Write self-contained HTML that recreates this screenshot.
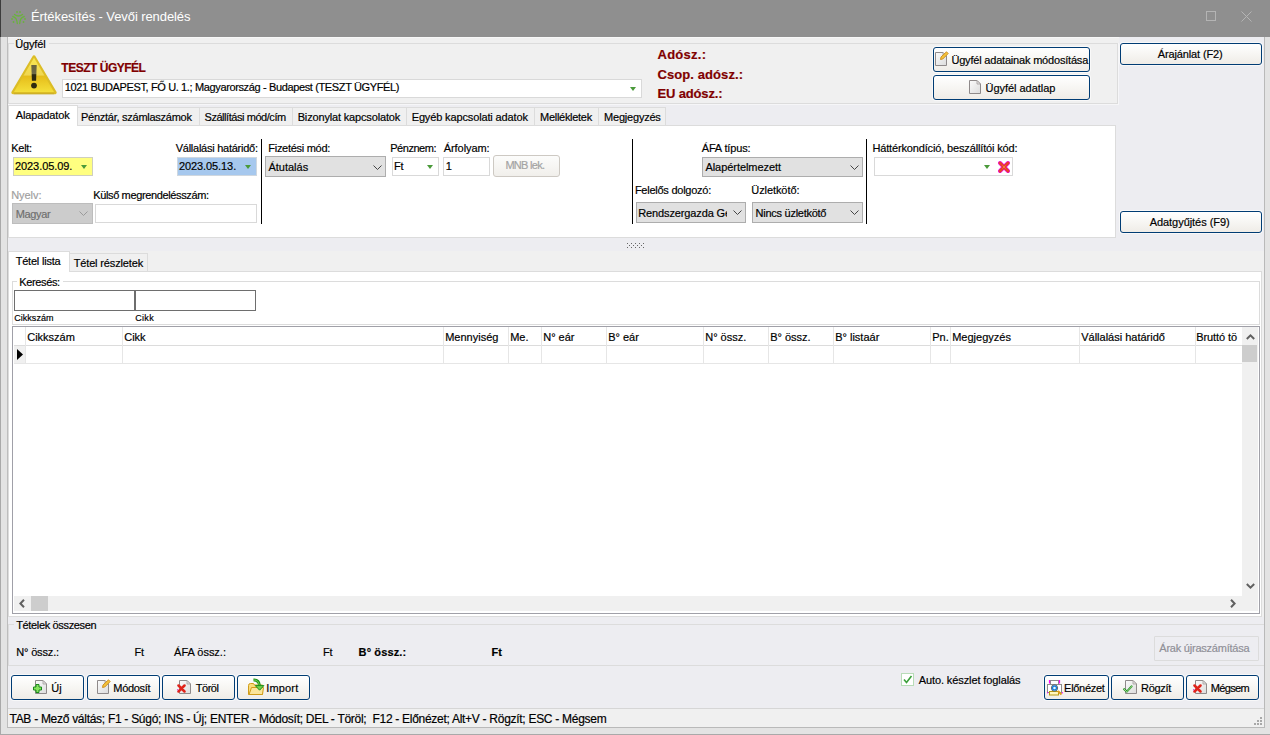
<!DOCTYPE html><html><head><meta charset="utf-8"><style>
html,body{margin:0;padding:0;}
body{width:1270px;height:735px;overflow:hidden;position:relative;background:#ededf1;font-family:"Liberation Sans",sans-serif;}
.a{position:absolute;box-sizing:border-box;}
.t{position:absolute;white-space:nowrap;font-family:"Liberation Sans",sans-serif;color:#000;-webkit-text-stroke:0.18px;}
.btn{border:1px solid #003c74;border-radius:3px;background:linear-gradient(#ffffff,#f7f6f3 50%,#efece7);box-shadow:0 0 0 1px rgba(255,255,255,0.6);}
</style></head><body>
<div class="a" style="left:0px;top:0px;width:1270px;height:37px;background:#8f8f8f"></div>
<div class="a" style="left:0px;top:0px;width:1px;height:37px;background:#3c3c3c"></div>
<div class="a" style="left:0px;top:37px;width:1px;height:698px;background:#a9a9a9"></div>
<div class="a" style="left:1px;top:37px;width:6px;height:698px;background:#e3e3e3"></div>
<div class="a" style="left:7px;top:37px;width:1px;height:691px;background:#bdbdbd"></div>
<div class="a" style="left:1264px;top:37px;width:1px;height:691px;background:#b9b9b9"></div>
<div class="a" style="left:1265px;top:37px;width:5px;height:698px;background:#e3e3e3"></div>
<div class="a" style="left:7px;top:727px;width:1258px;height:1px;background:#b9b9b9"></div>
<div class="a" style="left:1px;top:728px;width:1269px;height:6px;background:#e3e3e3"></div>
<div class="a" style="left:0px;top:734px;width:1270px;height:1px;background:#a9a9a9"></div>
<svg class="a" style="left:10px;top:9.6px" width="17" height="16" viewBox="0 0 17 16">
<g fill="#6ab23e"><circle cx="7" cy="2" r="0.9"/><circle cx="10" cy="2" r="0.9"/>
<circle cx="2" cy="9" r="0.9"/><circle cx="15" cy="9" r="0.9"/><circle cx="3.5" cy="12" r="0.9"/><circle cx="13.5" cy="12" r="0.9"/></g>
<g fill="none" stroke="#6ab23e" stroke-width="1.3" stroke-linecap="round">
<path d="M4.5 4.5 Q8.5 7.5 12.5 4.5"/><path d="M2.8 6.5 Q7 7.5 7.3 13.5"/><path d="M14.2 6.5 Q10 7.5 9.7 13.5"/></g></svg>
<div class="t" style="left:31.00px;top:9px;font-size:13px;line-height:15px;color:#ffffff;letter-spacing:-0.089px;-webkit-text-stroke:0;">Értékesítés - Vevői rendelés</div>
<div class="a" style="left:1206px;top:11px;width:10px;height:10px;border:1px solid #b4b4b4"></div>
<svg class="a" style="left:1241px;top:11px" width="11" height="11"><path d="M0.5 0.5L10.5 10.5M10.5 0.5L0.5 10.5" stroke="#b4b4b4" stroke-width="1"/></svg>
<div class="a" style="left:8px;top:37px;width:1111px;height:68px;background:#f0f0f0"></div>
<div class="a" style="left:8px;top:37px;width:1111px;height:1px;background:#f7f7f7"></div>
<div class="a" style="left:8px;top:104px;width:1111px;height:1px;background:#f6f6f8"></div>
<div class="a" style="left:1118px;top:43px;width:1px;height:62px;background:#f6f6f8"></div>
<div class="a" style="left:8px;top:43px;width:1110px;height:61px;border:1px solid #dcdcdc"></div>
<div class="a" style="left:14px;top:38px;width:35px;height:12px;background:#f0f0f0"></div>
<div class="t" style="left:15.20px;top:38px;font-size:11px;line-height:13px;letter-spacing:-0.138px;">Ügyfél</div>
<svg class="a" style="left:11px;top:54px" width="47" height="42" viewBox="0 0 47 42">
<defs><linearGradient id="wg" x1="0" y1="0" x2="0" y2="1"><stop offset="0" stop-color="#f8e650"/><stop offset="0.5" stop-color="#f0d752"/><stop offset="0.54" stop-color="#e6bd1a"/><stop offset="1" stop-color="#f4df3a"/></linearGradient>
<linearGradient id="eg" x1="0" y1="0" x2="0" y2="1"><stop offset="0" stop-color="#67623c"/><stop offset="0.55" stop-color="#6e6a48"/><stop offset="0.62" stop-color="#2e2a10"/><stop offset="1" stop-color="#2e2a10"/></linearGradient></defs>
<path d="M23 3 L44 38.5 L2 38.5 Z" fill="url(#wg)" stroke="#dcbd26" stroke-width="3.4" stroke-linejoin="round"/>
<path d="M23 3.8 L43 38 L3 38 Z" fill="url(#wg)"/>
<path d="M3 39.8 L43 39.8" stroke="#b59a2a" stroke-width="1" opacity="0.5"/>
<path d="M20.3 11 L25.7 11 L25.1 26.7 L20.9 26.7 Z" fill="url(#eg)"/>
<circle cx="23" cy="31.6" r="2.9" fill="#2e2a10"/>
</svg>
<div class="t" style="left:61.30px;top:61px;font-size:12px;line-height:14px;color:#800000;font-weight:bold;letter-spacing:-0.488px;">TESZT ÜGYFÉL</div>
<div class="a" style="left:62px;top:79px;width:580px;height:19px;background:#fff;border:1px solid #d9d9d9"></div>
<div class="t" style="left:64.70px;top:81px;font-size:11px;line-height:13px;letter-spacing:-0.365px;">1021 BUDAPEST, FŐ U. 1.; Magyarország - Budapest (TESZT ÜGYFÉL)</div>
<div class="a" style="left:629.7px;top:87px;width:0;height:0;border-left:3.8px solid transparent;border-right:3.8px solid transparent;border-top:4.3px solid #4a9a3a"></div>
<div class="t" style="left:657.50px;top:47px;font-size:13px;line-height:15px;color:#800000;font-weight:bold;letter-spacing:0.260px;">Adósz.:</div>
<div class="t" style="left:657.50px;top:67px;font-size:13px;line-height:15px;color:#800000;font-weight:bold;letter-spacing:0.083px;">Csop. adósz.:</div>
<div class="t" style="left:657.50px;top:86px;font-size:13px;line-height:15px;color:#800000;font-weight:bold;letter-spacing:-0.161px;">EU adósz.:</div>
<div class="a btn" style="left:933px;top:47px;width:157px;height:25px"></div>
<div class="a btn" style="left:933px;top:75px;width:157px;height:25px"></div>
<div class="t" style="left:951.40px;top:54px;font-size:11px;line-height:13px;letter-spacing:-0.191px;">Ügyfél adatainak módosítása</div>
<div class="t" style="left:985.50px;top:82px;font-size:11px;line-height:13px;letter-spacing:-0.029px;">Ügyfél adatlap</div>
<svg class="a" style="left:935px;top:52px" width="12" height="14" viewBox="0 0 12 14">
<defs><linearGradient id="dg1" x1="0" y1="0" x2="1" y2="1"><stop offset="0" stop-color="#fbfbfb"/><stop offset="1" stop-color="#dcdcdc"/></linearGradient></defs>
<path d="M0.5 0.5 H8 L11.5 4 V13.5 H0.5Z" fill="url(#dg1)" stroke="#8f8a8a" stroke-width="1"/>
<path d="M8 0.5 V4 H11.5 Z" fill="#e4e4e4" stroke="#a29c9c" stroke-width="0.8" stroke-linejoin="miter"/></svg>
<svg class="a" style="left:939px;top:51px" width="10" height="10" viewBox="0 0 10 10">
<path d="M1.5 8.5 L2 6 L7.5 0.8 L9.2 2.5 L3.8 8 Z" fill="#f5c33b" stroke="#c98a1a" stroke-width="0.9"/></svg>
<svg class="a" style="left:969px;top:80px" width="12" height="14" viewBox="0 0 12 14">
<defs><linearGradient id="dg2" x1="0" y1="0" x2="1" y2="1"><stop offset="0" stop-color="#fbfbfb"/><stop offset="1" stop-color="#dcdcdc"/></linearGradient></defs>
<path d="M0.5 0.5 H8 L11.5 4 V13.5 H0.5Z" fill="url(#dg2)" stroke="#8f8a8a" stroke-width="1"/>
<path d="M8 0.5 V4 H11.5 Z" fill="#e4e4e4" stroke="#a29c9c" stroke-width="0.8" stroke-linejoin="miter"/></svg>
<div class="a btn" style="left:1120px;top:43px;width:142px;height:22px"></div>
<div class="t" style="left:1157.70px;top:48px;font-size:11px;line-height:13px;letter-spacing:-0.127px;">Árajánlat (F2)</div>
<div class="a btn" style="left:1120px;top:211px;width:142px;height:22px"></div>
<div class="t" style="left:1149.70px;top:216px;font-size:11px;line-height:13px;letter-spacing:-0.050px;">Adatgyűjtés (F9)</div>
<div class="a" style="left:8px;top:125px;width:1108px;height:113px;background:#fff;border:1px solid #dcdcdc"></div>
<div class="a" style="left:77px;top:107px;width:123px;height:19px;background:#f0f0f0;border:1px solid #dcdcdc"></div>
<div class="t" style="left:81.00px;top:111px;font-size:11px;line-height:13px;letter-spacing:-0.260px;">Pénztár, számlaszámok</div>
<div class="a" style="left:199px;top:107px;width:94px;height:19px;background:#f0f0f0;border:1px solid #dcdcdc"></div>
<div class="t" style="left:204.50px;top:111px;font-size:11px;line-height:13px;letter-spacing:-0.446px;">Szállítási mód/cím</div>
<div class="a" style="left:292px;top:107px;width:115px;height:19px;background:#f0f0f0;border:1px solid #dcdcdc"></div>
<div class="t" style="left:297.70px;top:111px;font-size:11px;line-height:13px;letter-spacing:-0.162px;">Bizonylat kapcsolatok</div>
<div class="a" style="left:406px;top:107px;width:129px;height:19px;background:#f0f0f0;border:1px solid #dcdcdc"></div>
<div class="t" style="left:411.70px;top:111px;font-size:11px;line-height:13px;letter-spacing:-0.138px;">Egyéb kapcsolati adatok</div>
<div class="a" style="left:534px;top:107px;width:65px;height:19px;background:#f0f0f0;border:1px solid #dcdcdc"></div>
<div class="t" style="left:540.10px;top:111px;font-size:11px;line-height:13px;letter-spacing:-0.293px;">Mellékletek</div>
<div class="a" style="left:598px;top:107px;width:68px;height:19px;background:#f0f0f0;border:1px solid #dcdcdc"></div>
<div class="t" style="left:604.10px;top:111px;font-size:11px;line-height:13px;letter-spacing:-0.213px;">Megjegyzés</div>
<div class="a" style="left:8px;top:105px;width:70px;height:21px;background:#fff;border:1px solid #dcdcdc;border-bottom:none"></div>
<div class="t" style="left:15.70px;top:109px;font-size:11px;line-height:13px;letter-spacing:-0.122px;">Alapadatok</div>
<div class="t" style="left:11.20px;top:142px;font-size:11px;line-height:13px;letter-spacing:-0.258px;">Kelt:</div>
<div class="a" style="left:13px;top:157px;width:80px;height:19px;background:#ffff80;border:1px solid #cfcfbf"></div>
<div class="t" style="left:15.00px;top:160px;font-size:11px;line-height:13px;letter-spacing:-0.079px;">2023.05.09.</div>
<div class="a" style="left:80.7px;top:165px;width:0;height:0;border-left:3.8px solid transparent;border-right:3.8px solid transparent;border-top:4.3px solid #4a9a3a"></div>
<div class="t" style="left:175.70px;top:142px;font-size:11px;line-height:13px;letter-spacing:-0.254px;">Vállalási határidő:</div>
<div class="a" style="left:177px;top:157px;width:80px;height:19px;background:#a6c8ee;border:1px solid #cfd7df"></div>
<div class="t" style="left:178.90px;top:160px;font-size:11px;line-height:13px;letter-spacing:-0.079px;">2023.05.13.</div>
<div class="a" style="left:244.7px;top:165px;width:0;height:0;border-left:3.8px solid transparent;border-right:3.8px solid transparent;border-top:4.3px solid #4a9a3a"></div>
<div class="a" style="left:261px;top:139px;width:1px;height:85px;background:#000"></div>
<div class="t" style="left:268.30px;top:142px;font-size:11px;line-height:13px;letter-spacing:-0.286px;">Fizetési mód:</div>
<div class="a" style="left:265px;top:156px;width:121px;height:21px;background:#e1e1e1;border:1px solid #adadad"></div>
<div class="t" style="left:268.50px;top:161px;font-size:11px;line-height:13px;letter-spacing:-0.012px;">Átutalás</div>
<svg class="a" style="left:373px;top:165px" width="9" height="5" viewBox="0 0 9 5"><path d="M0.5 0.5 L4.5 4.5 L8.5 0.5" fill="none" stroke="#444" stroke-width="1"/></svg>
<div class="t" style="left:390.20px;top:142px;font-size:11px;line-height:13px;letter-spacing:-0.452px;">Pénznem:</div>
<div class="t" style="left:443.70px;top:142px;font-size:11px;line-height:13px;letter-spacing:-0.059px;">Árfolyam:</div>
<div class="a" style="left:392px;top:157px;width:47px;height:19px;background:#fff;border:1px solid #d9d9d9"></div>
<div class="t" style="left:393.90px;top:160px;font-size:11px;line-height:13px;">Ft</div>
<div class="a" style="left:426.7px;top:165px;width:0;height:0;border-left:3.8px solid transparent;border-right:3.8px solid transparent;border-top:4.3px solid #4a9a3a"></div>
<div class="a" style="left:443px;top:157px;width:47px;height:19px;background:#fff;border:1px solid #d9d9d9"></div>
<div class="t" style="left:445.70px;top:160px;font-size:11px;line-height:13px;">1</div>
<div class="a" style="left:493px;top:155px;width:67px;height:22px;border:1px solid #cdc9c3;border-radius:3px;background:linear-gradient(#fcfcfb,#f1efeb)"></div>
<div class="t" style="left:505.40px;top:159px;font-size:11px;line-height:13px;color:#a3a3a3;letter-spacing:-0.718px;">MNB lek.</div>
<div class="t" style="left:11.20px;top:189px;font-size:11px;line-height:13px;color:#a0a0a0;letter-spacing:-0.052px;">Nyelv:</div>
<div class="a" style="left:12px;top:203px;width:81px;height:21px;background:#cccccc;border:1px solid #bdbdbd"></div>
<div class="t" style="left:15.70px;top:208px;font-size:11px;line-height:13px;color:#6f6f6f;letter-spacing:-0.338px;">Magyar</div>
<svg class="a" style="left:79px;top:211px" width="9" height="5" viewBox="0 0 9 5"><path d="M0.5 0.5 L4.5 4.5 L8.5 0.5" fill="none" stroke="#9a9a9a" stroke-width="1"/></svg>
<div class="t" style="left:93.20px;top:189px;font-size:11px;line-height:13px;letter-spacing:-0.360px;">Külső megrendelésszám:</div>
<div class="a" style="left:95px;top:204px;width:162px;height:19px;background:#fff;border:1px solid #d9d9d9"></div>
<div class="a" style="left:632px;top:139px;width:1px;height:85px;background:#000"></div>
<div class="t" style="left:701.70px;top:142px;font-size:11px;line-height:13px;letter-spacing:-0.132px;">ÁFA típus:</div>
<div class="a" style="left:702px;top:157px;width:161px;height:20px;background:#e1e1e1;border:1px solid #adadad"></div>
<div class="t" style="left:705.40px;top:161px;font-size:11px;line-height:13px;letter-spacing:-0.048px;">Alapértelmezett</div>
<svg class="a" style="left:849.5px;top:165px" width="9" height="5" viewBox="0 0 9 5"><path d="M0.5 0.5 L4.5 4.5 L8.5 0.5" fill="none" stroke="#444" stroke-width="1"/></svg>
<div class="t" style="left:634.90px;top:184px;font-size:11px;line-height:13px;letter-spacing:-0.250px;">Felelős dolgozó:</div>
<div class="a" style="left:636px;top:202px;width:110px;height:21px;background:#e1e1e1;border:1px solid #adadad"></div>
<div class="t" style="left:638.2px;top:207px;font-size:11px;line-height:13px;width:89px;overflow:hidden;letter-spacing:-0.12px">Rendszergazda Gépház</div>
<svg class="a" style="left:733px;top:210px" width="9" height="5" viewBox="0 0 9 5"><path d="M0.5 0.5 L4.5 4.5 L8.5 0.5" fill="none" stroke="#444" stroke-width="1"/></svg>
<div class="t" style="left:751.30px;top:184px;font-size:11px;line-height:13px;letter-spacing:-0.082px;">Üzletkötő:</div>
<div class="a" style="left:752px;top:202px;width:111px;height:21px;background:#e1e1e1;border:1px solid #adadad"></div>
<div class="t" style="left:755.60px;top:207px;font-size:11px;line-height:13px;letter-spacing:-0.266px;">Nincs üzletkötő</div>
<svg class="a" style="left:849.5px;top:210px" width="9" height="5" viewBox="0 0 9 5"><path d="M0.5 0.5 L4.5 4.5 L8.5 0.5" fill="none" stroke="#444" stroke-width="1"/></svg>
<div class="a" style="left:866px;top:139px;width:1px;height:85px;background:#000"></div>
<div class="t" style="left:872.40px;top:142px;font-size:11px;line-height:13px;letter-spacing:-0.149px;">Háttérkondíció, beszállítói kód:</div>
<div class="a" style="left:874px;top:157px;width:139px;height:19px;background:#fff;border:1px solid #d9d9d9"></div>
<div class="a" style="left:983.7px;top:165px;width:0;height:0;border-left:3.8px solid transparent;border-right:3.8px solid transparent;border-top:4.3px solid #4a9a3a"></div>
<svg class="a" style="left:997px;top:160px" width="14" height="14" viewBox="0 0 14 14">
<path d="M3 3 L11 11 M11 3 L3 11" stroke="#f000f0" stroke-width="4" stroke-linecap="round"/><path d="M3 3 L11 11 M11 3 L3 11" stroke="#e8402a" stroke-width="2.9" stroke-linecap="round"/><path d="M5.5 5.5 L8.5 8.5 M8.5 5.5 L5.5 8.5" stroke="#f07a40" stroke-width="1" /></svg>
<div class="a" style="left:627px;top:243px;width:1px;height:1px;background:#666"></div>
<div class="a" style="left:631px;top:243px;width:1px;height:1px;background:#666"></div>
<div class="a" style="left:635px;top:243px;width:1px;height:1px;background:#666"></div>
<div class="a" style="left:639px;top:243px;width:1px;height:1px;background:#666"></div>
<div class="a" style="left:643px;top:243px;width:1px;height:1px;background:#666"></div>
<div class="a" style="left:629px;top:245px;width:1px;height:1px;background:#666"></div>
<div class="a" style="left:633px;top:245px;width:1px;height:1px;background:#666"></div>
<div class="a" style="left:637px;top:245px;width:1px;height:1px;background:#666"></div>
<div class="a" style="left:641px;top:245px;width:1px;height:1px;background:#666"></div>
<div class="a" style="left:627px;top:247px;width:1px;height:1px;background:#666"></div>
<div class="a" style="left:631px;top:247px;width:1px;height:1px;background:#666"></div>
<div class="a" style="left:635px;top:247px;width:1px;height:1px;background:#666"></div>
<div class="a" style="left:639px;top:247px;width:1px;height:1px;background:#666"></div>
<div class="a" style="left:643px;top:247px;width:1px;height:1px;background:#666"></div>
<div class="a" style="left:8px;top:251px;width:1256px;height:20px;background:#f0f0f0"></div>
<div class="a" style="left:1262px;top:271px;width:2px;height:346px;background:#f0f0f0"></div>
<div class="a" style="left:8px;top:271px;width:1254px;height:346px;background:#fff;border:1px solid #dcdcdc"></div>
<div class="a" style="left:69px;top:253px;width:79px;height:19px;background:#f0f0f0;border:1px solid #dcdcdc"></div>
<div class="t" style="left:73.70px;top:257px;font-size:11px;line-height:13px;letter-spacing:-0.147px;">Tétel részletek</div>
<div class="a" style="left:8px;top:251px;width:62px;height:21px;background:#fff;border:1px solid #dcdcdc;border-bottom:none"></div>
<div class="t" style="left:15.70px;top:255px;font-size:11px;line-height:13px;letter-spacing:-0.209px;">Tétel lista</div>
<div class="a" style="left:12px;top:281px;width:1248px;height:44px;border:1px solid #dcdcdc"></div>
<div class="a" style="left:17px;top:278px;width:46px;height:10px;background:#fff"></div>
<div class="t" style="left:19.20px;top:276px;font-size:11px;line-height:13px;letter-spacing:-0.348px;">Keresés:</div>
<div class="a" style="left:14px;top:290px;width:121px;height:21px;background:#fff;border:1px solid #6e6e6e"></div>
<div class="a" style="left:135px;top:290px;width:121px;height:21px;background:#fff;border:1px solid #6e6e6e"></div>
<div class="t" style="left:14.20px;top:313px;font-size:9px;line-height:11px;letter-spacing:0.043px;">Cikkszám</div>
<div class="t" style="left:135.20px;top:313px;font-size:9px;line-height:11px;letter-spacing:0.333px;">Cikk</div>
<div class="a" style="left:12px;top:326px;width:1248px;height:288px;border:1px solid #a0a0a8"></div>
<div class="a" style="left:14px;top:327px;width:1228px;height:269px;background:#fff"></div>
<div class="a" style="left:1242px;top:327px;width:16px;height:269px;background:#f0f0f0"></div>
<div class="a" style="left:14px;top:596px;width:1244px;height:15px;background:#f0f0f0"></div>
<div class="a" style="left:14px;top:345px;width:1228px;height:1px;background:#dcdcdc"></div>
<div class="a" style="left:14px;top:363px;width:1228px;height:1px;background:#e6e6e6"></div>
<div class="a" style="left:14px;top:346px;width:11px;height:17px;background:#f0f0f0"></div>
<div class="a" style="left:25px;top:327px;width:1px;height:36px;background:#e6e6e6"></div>
<div class="a" style="left:122px;top:327px;width:1px;height:36px;background:#e6e6e6"></div>
<div class="a" style="left:443px;top:327px;width:1px;height:36px;background:#e6e6e6"></div>
<div class="a" style="left:508px;top:327px;width:1px;height:36px;background:#e6e6e6"></div>
<div class="a" style="left:541px;top:327px;width:1px;height:36px;background:#e6e6e6"></div>
<div class="a" style="left:606px;top:327px;width:1px;height:36px;background:#e6e6e6"></div>
<div class="a" style="left:703px;top:327px;width:1px;height:36px;background:#e6e6e6"></div>
<div class="a" style="left:768px;top:327px;width:1px;height:36px;background:#e6e6e6"></div>
<div class="a" style="left:833px;top:327px;width:1px;height:36px;background:#e6e6e6"></div>
<div class="a" style="left:930px;top:327px;width:1px;height:36px;background:#e6e6e6"></div>
<div class="a" style="left:950px;top:327px;width:1px;height:36px;background:#e6e6e6"></div>
<div class="a" style="left:1079px;top:327px;width:1px;height:36px;background:#e6e6e6"></div>
<div class="a" style="left:1195px;top:327px;width:1px;height:36px;background:#e6e6e6"></div>
<div class="a" style="left:1195px;top:327px;width:47px;height:19px;overflow:hidden">
<div class="t" style="left:1.3px;top:4px;font-size:11px;line-height:13px;letter-spacing:-0.1px">Bruttó tö</div></div>
<div class="t" style="left:27.20px;top:331px;font-size:11px;line-height:13px;">Cikkszám</div>
<div class="t" style="left:124.20px;top:331px;font-size:11px;line-height:13px;">Cikk</div>
<div class="t" style="left:445.20px;top:331px;font-size:11px;line-height:13px;">Mennyiség</div>
<div class="t" style="left:510.20px;top:331px;font-size:11px;line-height:13px;">Me.</div>
<div class="t" style="left:543.20px;top:331px;font-size:11px;line-height:13px;">N° eár</div>
<div class="t" style="left:608.20px;top:331px;font-size:11px;line-height:13px;">B° eár</div>
<div class="t" style="left:705.20px;top:331px;font-size:11px;line-height:13px;">N° össz.</div>
<div class="t" style="left:770.20px;top:331px;font-size:11px;line-height:13px;">B° össz.</div>
<div class="t" style="left:835.20px;top:331px;font-size:11px;line-height:13px;">B° listaár</div>
<div class="t" style="left:932.20px;top:331px;font-size:11px;line-height:13px;">Pn.</div>
<div class="t" style="left:952.20px;top:331px;font-size:11px;line-height:13px;">Megjegyzés</div>
<div class="t" style="left:1081.20px;top:331px;font-size:11px;line-height:13px;">Vállalási határidő</div>
<svg class="a" style="left:17px;top:349px" width="7" height="11"><path d="M0 0 L6 5.5 L0 11Z" fill="#000"/></svg>
<svg class="a" style="left:1245.5px;top:334px" width="9" height="6"><path d="M0.8 5 L4.5 1.4 L8.2 5" fill="none" stroke="#606060" stroke-width="2"/></svg>
<div class="a" style="left:1242px;top:345px;width:15px;height:17px;background:#cdcdcd"></div>
<svg class="a" style="left:1245.5px;top:583px" width="9" height="6"><path d="M0.8 1 L4.5 4.6 L8.2 1" fill="none" stroke="#606060" stroke-width="2"/></svg>
<svg class="a" style="left:19px;top:599px" width="6" height="9"><path d="M5 0.8 L1.4 4.5 L5 8.2" fill="none" stroke="#606060" stroke-width="2"/></svg>
<div class="a" style="left:31px;top:596px;width:17px;height:15px;background:#cdcdcd"></div>
<svg class="a" style="left:1230px;top:599px" width="6" height="9"><path d="M1 0.8 L4.6 4.5 L1 8.2" fill="none" stroke="#606060" stroke-width="2"/></svg>
<div class="a" style="left:8px;top:624px;width:1256px;height:42px;border:1px solid #dcdcdc;border-right:none"></div>
<div class="a" style="left:14px;top:618px;width:86px;height:12px;background:#ededf1"></div>
<div class="t" style="left:16.20px;top:619px;font-size:11px;line-height:13px;letter-spacing:-0.344px;">Tételek összesen</div>
<div class="t" style="left:16.20px;top:646px;font-size:11px;line-height:13px;letter-spacing:-0.145px;">N° össz.:</div>
<div class="t" style="left:134.40px;top:646px;font-size:11px;line-height:13px;">Ft</div>
<div class="t" style="left:174.10px;top:646px;font-size:11px;line-height:13px;letter-spacing:-0.011px;">ÁFA össz.:</div>
<div class="t" style="left:322.90px;top:646px;font-size:11px;line-height:13px;">Ft</div>
<div class="t" style="left:358.60px;top:646px;font-size:11px;line-height:13px;font-weight:bold;letter-spacing:0.126px;">B° össz.:</div>
<div class="t" style="left:491.60px;top:646px;font-size:11px;line-height:13px;font-weight:bold;">Ft</div>
<div class="a" style="left:1154px;top:636px;width:105px;height:25px;border:1px solid #dcdcdc;border-radius:1px"></div>
<div class="t" style="left:1159.30px;top:642px;font-size:11px;line-height:13px;color:#8f8f97;letter-spacing:-0.223px;">Árak újraszámítása</div>
<div class="a btn" style="left:11px;top:675px;width:73px;height:25px"></div>
<div class="t" style="left:51.30px;top:682px;font-size:11px;line-height:13px;">Új</div>
<div class="a btn" style="left:87px;top:675px;width:73px;height:25px"></div>
<div class="t" style="left:113.30px;top:682px;font-size:11px;line-height:13px;letter-spacing:-0.326px;">Módosít</div>
<div class="a btn" style="left:162px;top:675px;width:73px;height:25px"></div>
<div class="t" style="left:195.70px;top:682px;font-size:11px;line-height:13px;letter-spacing:-0.441px;">Töröl</div>
<div class="a btn" style="left:237px;top:675px;width:73px;height:25px"></div>
<div class="t" style="left:266.20px;top:682px;font-size:11px;line-height:13px;letter-spacing:0.183px;">Import</div>
<div class="a btn" style="left:1044px;top:675px;width:65px;height:25px"></div>
<div class="t" style="left:1064.10px;top:682px;font-size:11px;line-height:13px;letter-spacing:-0.292px;">Előnézet</div>
<div class="a btn" style="left:1111px;top:675px;width:73px;height:25px"></div>
<div class="t" style="left:1141.10px;top:682px;font-size:11px;line-height:13px;letter-spacing:-0.302px;">Rögzít</div>
<div class="a btn" style="left:1186px;top:675px;width:73px;height:25px"></div>
<div class="t" style="left:1210.70px;top:682px;font-size:11px;line-height:13px;letter-spacing:-0.637px;">Mégsem</div>
<div class="a" style="left:901px;top:673px;width:13px;height:13px;background:#fff;border:1px solid #b8dcb8"></div>
<svg class="a" style="left:902px;top:674px" width="11" height="11"><path d="M2 5.5 L4.5 8.5 L9.5 2" fill="none" stroke="#3aa03a" stroke-width="1.6"/></svg>
<div class="t" style="left:918.70px;top:674px;font-size:11px;line-height:13px;letter-spacing:-0.097px;">Auto. készlet foglalás</div>
<div class="a" style="left:8px;top:708px;width:1256px;height:1px;background:#d6d6d6"></div>
<div class="a" style="left:8px;top:709px;width:1256px;height:18px;background:#f0f0f0"></div>
<div class="t" style="left:9.50px;top:712px;font-size:12px;line-height:14px;letter-spacing:-0.285px;">TAB - Mező váltás; F1 - Súgó; INS - Új; ENTER - Módosít; DEL - Töröl;  F12 - Előnézet; Alt+V - Rögzít; ESC - Mégsem</div>
<div class="a" style="left:1260px;top:717px;width:2px;height:2px;background:#a8a8a8"></div>
<div class="a" style="left:1257px;top:720px;width:2px;height:2px;background:#a8a8a8"></div>
<div class="a" style="left:1260px;top:720px;width:2px;height:2px;background:#a8a8a8"></div>
<div class="a" style="left:1254px;top:723px;width:2px;height:2px;background:#a8a8a8"></div>
<div class="a" style="left:1257px;top:723px;width:2px;height:2px;background:#a8a8a8"></div>
<div class="a" style="left:1260px;top:723px;width:2px;height:2px;background:#a8a8a8"></div>
<svg class="a" style="left:35px;top:680px" width="12" height="14" viewBox="0 0 12 14">
<defs><linearGradient id="dg3" x1="0" y1="0" x2="1" y2="1"><stop offset="0" stop-color="#fbfbfb"/><stop offset="1" stop-color="#dcdcdc"/></linearGradient></defs>
<path d="M0.5 0.5 H8 L11.5 4 V13.5 H0.5Z" fill="url(#dg3)" stroke="#8f8a8a" stroke-width="1"/>
<path d="M8 0.5 V4 H11.5 Z" fill="#e4e4e4" stroke="#a29c9c" stroke-width="0.8" stroke-linejoin="miter"/></svg>
<svg class="a" style="left:33px;top:684px" width="9" height="9" viewBox="0 0 9 9">
<path d="M3 0.5 H6 V3 H8.5 V6 H6 V8.5 H3 V6 H0.5 V3 H3Z" fill="#86e35e" stroke="#1b8a1b" stroke-width="1"/></svg>
<svg class="a" style="left:97px;top:680px" width="12" height="14" viewBox="0 0 12 14">
<defs><linearGradient id="dg4" x1="0" y1="0" x2="1" y2="1"><stop offset="0" stop-color="#fbfbfb"/><stop offset="1" stop-color="#dcdcdc"/></linearGradient></defs>
<path d="M0.5 0.5 H8 L11.5 4 V13.5 H0.5Z" fill="url(#dg4)" stroke="#8f8a8a" stroke-width="1"/>
<path d="M8 0.5 V4 H11.5 Z" fill="#e4e4e4" stroke="#a29c9c" stroke-width="0.8" stroke-linejoin="miter"/></svg>
<svg class="a" style="left:101px;top:679px" width="10" height="10" viewBox="0 0 10 10">
<path d="M1.5 8.5 L2 6 L7.5 0.8 L9.2 2.5 L3.8 8 Z" fill="#f5c33b" stroke="#c98a1a" stroke-width="0.9"/></svg>
<svg class="a" style="left:179px;top:680px" width="12" height="14" viewBox="0 0 12 14">
<defs><linearGradient id="dg5" x1="0" y1="0" x2="1" y2="1"><stop offset="0" stop-color="#fbfbfb"/><stop offset="1" stop-color="#dcdcdc"/></linearGradient></defs>
<path d="M0.5 0.5 H8 L11.5 4 V13.5 H0.5Z" fill="url(#dg5)" stroke="#8f8a8a" stroke-width="1"/>
<path d="M8 0.5 V4 H11.5 Z" fill="#e4e4e4" stroke="#a29c9c" stroke-width="0.8" stroke-linejoin="miter"/></svg>
<svg class="a" style="left:177px;top:684px" width="9" height="9" viewBox="0 0 9 9">
<path d="M1.5 1.5 L7.5 7.5 M7.5 1.5 L1.5 7.5" stroke="#e0241a" stroke-width="2.5" stroke-linecap="round"/>
<path d="M0.6 5 L0.6 6.5" stroke="#e040e0" stroke-width="1"/></svg>
<svg class="a" style="left:1125px;top:680px" width="12" height="14" viewBox="0 0 12 14">
<defs><linearGradient id="dg6" x1="0" y1="0" x2="1" y2="1"><stop offset="0" stop-color="#fbfbfb"/><stop offset="1" stop-color="#dcdcdc"/></linearGradient></defs>
<path d="M0.5 0.5 H8 L11.5 4 V13.5 H0.5Z" fill="url(#dg6)" stroke="#8f8a8a" stroke-width="1"/>
<path d="M8 0.5 V4 H11.5 Z" fill="#e4e4e4" stroke="#a29c9c" stroke-width="0.8" stroke-linejoin="miter"/></svg>
<svg class="a" style="left:1123px;top:685px" width="10" height="8" viewBox="0 0 10 8">
<path d="M1.2 4.2 L3.8 6.6 L8.6 1.4" fill="none" stroke="#2a8f2a" stroke-width="2.1" stroke-linecap="round" stroke-linejoin="round"/>
<path d="M1 4 L3.8 6.8 L9 1.2" fill="none" stroke="#b5f0a0" stroke-width="0.8" stroke-linecap="round" stroke-linejoin="round"/></svg>
<svg class="a" style="left:1195px;top:680px" width="12" height="14" viewBox="0 0 12 14">
<defs><linearGradient id="dg7" x1="0" y1="0" x2="1" y2="1"><stop offset="0" stop-color="#fbfbfb"/><stop offset="1" stop-color="#dcdcdc"/></linearGradient></defs>
<path d="M0.5 0.5 H8 L11.5 4 V13.5 H0.5Z" fill="url(#dg7)" stroke="#8f8a8a" stroke-width="1"/>
<path d="M8 0.5 V4 H11.5 Z" fill="#e4e4e4" stroke="#a29c9c" stroke-width="0.8" stroke-linejoin="miter"/></svg>
<svg class="a" style="left:1193px;top:684px" width="9" height="9" viewBox="0 0 9 9">
<path d="M1.5 1.5 L7.5 7.5 M7.5 1.5 L1.5 7.5" stroke="#e0241a" stroke-width="2.5" stroke-linecap="round"/>
<path d="M0.6 5 L0.6 6.5" stroke="#e040e0" stroke-width="1"/></svg>
<svg class="a" style="left:244px;top:676px" width="24" height="22" viewBox="0 0 24 22">
<path d="M4.5 18.5 V9.5 Q4.5 7.5 6.5 7.5 H9.5 L10.5 9 H18.5 V18.5 Z" fill="#f8dc7c" stroke="#d09c18" stroke-width="1"/>
<path d="M7.5 11.5 H19.5 L18.5 18.5 H5 Z" fill="#fbe59a" stroke="#d09c18" stroke-width="1"/>
<path d="M9.5 4 Q15 3.6 15.6 9.8" fill="none" stroke="#1d8f1d" stroke-width="2.8"/>
<path d="M9.8 4 Q14.6 3.8 15.3 9.5" fill="none" stroke="#73d24e" stroke-width="1"/>
<path d="M11.3 9.6 H19.9 L15.6 14.2 Z" fill="#72d04c" stroke="#1d8f1d" stroke-width="1" stroke-linejoin="round"/>
</svg>
<svg class="a" style="left:1047px;top:680px" width="16" height="16" viewBox="0 0 16 16">
<rect x="3.5" y="0.5" width="8" height="4" fill="#fff" stroke="#8c8c8c"/>
<rect x="0.5" y="4.5" width="14" height="8" fill="#fff" stroke="#8c8c8c"/>
<rect x="2.5" y="11.5" width="9" height="3.5" fill="#fff6c0" stroke="#b89a10"/>
<circle cx="7.5" cy="8" r="3.2" fill="#fff" stroke="#444" stroke-width="0.8"/>
<circle cx="7.5" cy="8" r="2" fill="#e8f8ff" stroke="#1a7fd8" stroke-width="1.4"/>
<path d="M11 11 L14.5 14.5" stroke="#e29a1a" stroke-width="2"/>
<path d="M2.5 0 V3.5 M12.5 0 V3.5 M0 12.5 L1 13 M15 13 L16 12.5" stroke="#ff00ff" stroke-width="1.2"/></svg>
</body></html>
